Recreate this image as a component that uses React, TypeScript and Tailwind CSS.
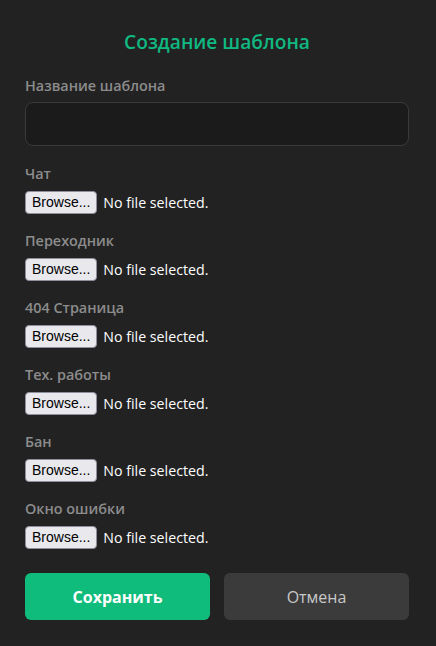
import React from "react";

const fields = [
  "Чат",
  "Переходник",
  "404 Страница",
  "Тех. работы",
  "Бан",
  "Окно ошибки",
];

function FakeFile() {
  return (
    <div className="flex items-center h-[23px]">
      <span
        className="
          h-[23px] px-[6px] flex items-center
          bg-[#e9e9ed] border border-[#8f8f9d] rounded-[4px]
          text-[14px] text-black
          font-['Liberation_Sans',Arial,sans-serif]
        "
      >
        Browse...
      </span>
      <span className="ml-[6px] text-[14.2px] text-white font-['Open_Sans',sans-serif]">
        No file selected.
      </span>
    </div>
  );
}

export default function App() {
  return (
    <div className="w-[436px] h-[646px] bg-[#222222] font-['Open_Sans',sans-serif] pl-[25px] pr-[27px] pt-[27px]">
      {/* Title */}
      <h2 className="text-center text-[19.2px] font-semibold text-[#10b981] leading-[30px]">
        Создание шаблона
      </h2>

      {/* Name */}
      <div className="mt-[19px]">
        <label className="block text-[14.4px] font-semibold text-[#8c8c8c] leading-[20px] mb-[6px]">
          Название шаблона
        </label>
        <input
          type="text"
          className="w-full h-[44px] rounded-[8px] bg-[#1b1b1b] border border-[#3a3a3a] outline-none px-3 text-white"
        />
      </div>

      {/* Files */}
      <div className="mt-[18px] flex flex-col gap-[17px]">
        {fields.map((f) => (
          <div key={f}>
            <label className="block text-[14.4px] font-semibold text-[#8c8c8c] leading-[20px] mb-[7px]">
              {f}
            </label>
            <FakeFile />
          </div>
        ))}
      </div>

      {/* Actions */}
      <div className="mt-[24px] flex gap-[14px]">
        <button className="flex-1 h-[47px] rounded-[6px] bg-[#10bc7c] text-white text-[16px] font-bold">
          Сохранить
        </button>
        <button className="flex-1 h-[47px] rounded-[6px] bg-[#3b3b3b] text-[#c8c8c8] text-[16px]">
          Отмена
        </button>
      </div>
    </div>
  );
}
